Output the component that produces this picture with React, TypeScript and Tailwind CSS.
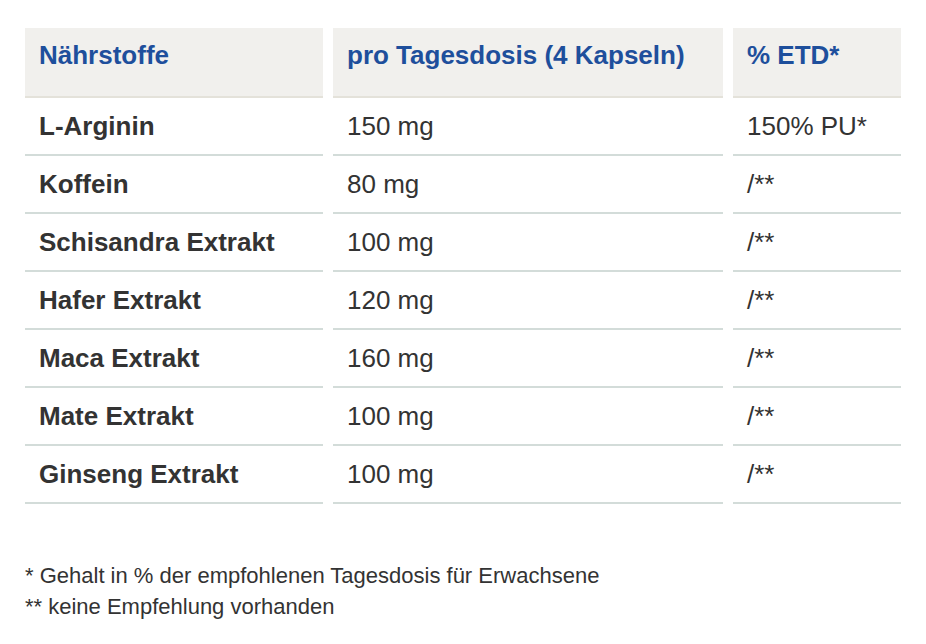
import React from "react";

const rows = [
  { name: "L-Arginin", amount: "150 mg", etd: "150% PU*" },
  { name: "Koffein", amount: "80 mg", etd: "/**" },
  { name: "Schisandra Extrakt", amount: "100 mg", etd: "/**" },
  { name: "Hafer Extrakt", amount: "120 mg", etd: "/**" },
  { name: "Maca Extrakt", amount: "160 mg", etd: "/**" },
  { name: "Mate Extrakt", amount: "100 mg", etd: "/**" },
  { name: "Ginseng Extrakt", amount: "100 mg", etd: "/**" },
];

export default function App() {
  return (
    <div className="bg-white w-[926px] h-[644px] pt-[28px] pl-[15px] text-[#333] font-['Liberation_Sans',Arial,sans-serif]">
      <table className="border-separate border-spacing-x-[10px] border-spacing-y-0 w-[896px] table-fixed">
        <colgroup>
          <col className="w-[298px]" />
          <col className="w-[390px]" />
          <col className="w-[168px]" />
        </colgroup>
        <thead>
          <tr>
            {["Nährstoffe", "pro Tagesdosis (4 Kapseln)", "% ETD*"].map((h) => (
              <th
                key={h}
                className="h-[70px] bg-[#f1f0ed] border-b-2 border-[#e4e2da] px-[14px] pb-[14px] text-left align-middle text-[26px] leading-[30px] font-bold text-[#1e4f9c]"
              >
                {h}
              </th>
            ))}
          </tr>
        </thead>
        <tbody>
          {rows.map((r) => (
            <tr key={r.name}>
              <td className="h-[58px] border-b-2 border-[#d3dcd9] px-[14px] align-middle text-[26px] leading-[30px] font-bold">
                {r.name}
              </td>
              <td className="h-[58px] border-b-2 border-[#d3dcd9] px-[14px] align-middle text-[26px] leading-[30px]">
                {r.amount}
              </td>
              <td className="h-[58px] border-b-2 border-[#d3dcd9] px-[14px] align-middle text-[26px] leading-[30px]">
                {r.etd}
              </td>
            </tr>
          ))}
        </tbody>
      </table>
      <div className="mt-[56px] pl-[10px] text-[22px] leading-[31px]">
        <p>* Gehalt in % der empfohlenen Tagesdosis für Erwachsene</p>
        <p>** keine Empfehlung vorhanden</p>
      </div>
    </div>
  );
}
